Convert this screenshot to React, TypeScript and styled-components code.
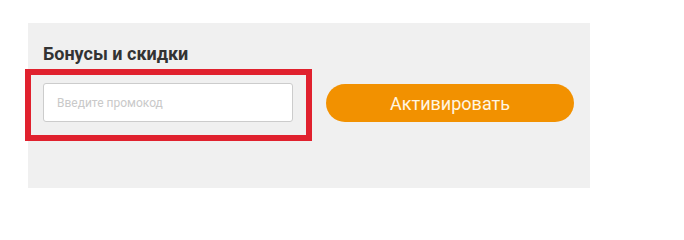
import styled, { createGlobalStyle } from "styled-components";

const GlobalStyle = createGlobalStyle`
  body {
    margin: 0;
    background: #ffffff;
    font-family: Roboto, "Liberation Sans", Arial, sans-serif;
  }
`;

export default function App() {
  return (
    <>
      <GlobalStyle />
      <Page>
        <Panel>
          <Title>Бонусы и скидки</Title>
          <Row>
            <Highlight>
              <PromoInput type="text" placeholder="Введите промокод" />
            </Highlight>
            <ActivateButton>Активировать</ActivateButton>
          </Row>
        </Panel>
      </Page>
    </>
  );
}

const Page = styled.div`
  padding: 23px 0 0 28px;
`;

const Panel = styled.div`
  box-sizing: border-box;
  width: 562px;
  height: 165px;
  padding: 21px 0 0 15px;
  background-color: #f0f0f0;
  display: flex;
  flex-direction: column;
`;

const Title = styled.h3`
  margin: 0;
  font-size: 18px;
  font-weight: 700;
  line-height: 20px;
  color: #333333;
`;

const Row = styled.div`
  display: flex;
  align-items: flex-start;
  margin-top: 5px;
  margin-left: -18px;
`;

const Highlight = styled.div`
  border: 6px solid #e0212e;
  padding: 8px 13px 13px 12px;
`;

const PromoInput = styled.input`
  box-sizing: border-box;
  display: block;
  width: 250px;
  height: 39px;
  padding: 0 13px;
  border: 1px solid #cccccc;
  border-radius: 3px;
  background: #ffffff;
  font-family: Roboto, "Liberation Sans", Arial, sans-serif;
  font-size: 12px;
  color: #333333;
  outline: none;
  &::placeholder {
    color: #c9c9c9;
  }
`;

const ActivateButton = styled.button`
  margin: 15px 0 0 14px;
  width: 248px;
  height: 38px;
  border: none;
  border-radius: 19px;
  background-color: #f29100;
  color: #fff6e3;
  font-family: Roboto, "Liberation Sans", Arial, sans-serif;
  font-size: 18px;
  font-weight: 400;
  cursor: pointer;
`;
